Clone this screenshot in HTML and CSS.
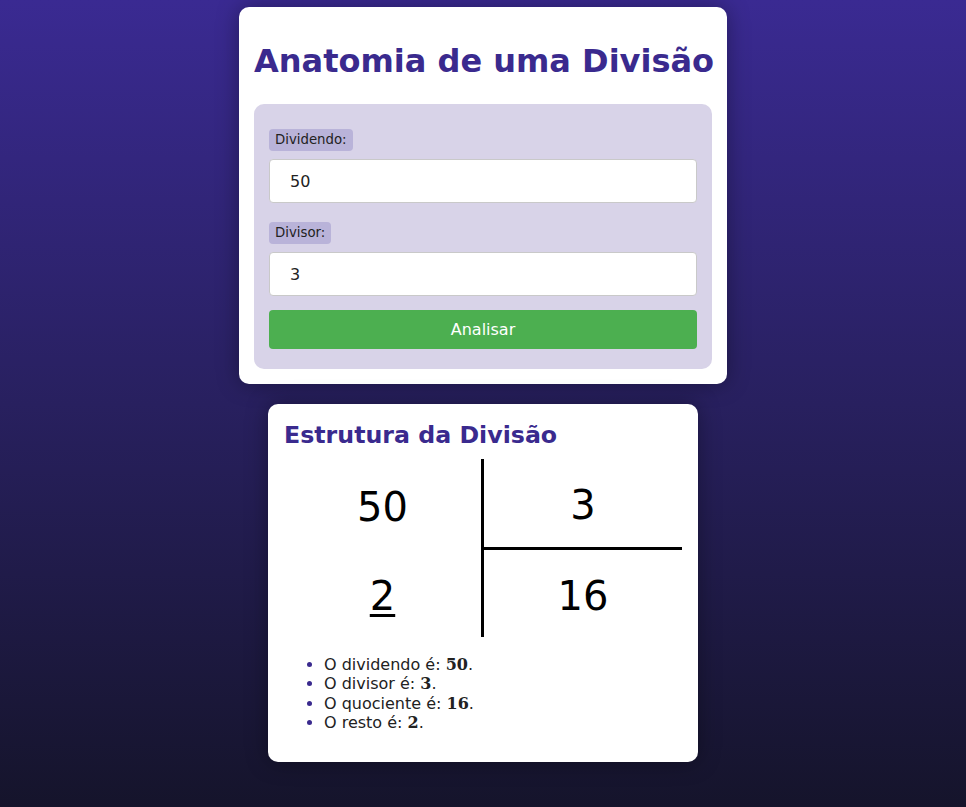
FILE: index.html
```html
<!DOCTYPE html>
<html lang="pt">
<head>
<meta charset="utf-8">
<title>Anatomia de uma Divisão</title>
<link rel="stylesheet" href="styles.css">
</head>
<body>
<main class="page">
  <section class="card card-form">
    <h1 class="title">Anatomia de uma Divisão</h1>
    <form class="form">
      <label class="label" for="dividendo">Dividendo:</label>
      <input class="input" id="dividendo" type="text" value="50">
      <label class="label label-second" for="divisor">Divisor:</label>
      <input class="input" id="divisor" type="text" value="3">
      <button class="button" type="button">Analisar</button>
    </form>
  </section>
  <section class="card card-result">
    <h2 class="subtitle">Estrutura da Divisão</h2>
    <div class="diagram">
      <div class="cell cell-left">50</div>
      <div class="cell cell-top-right">3</div>
      <div class="cell cell-left"><span class="rest">2</span></div>
      <div class="cell">16</div>
    </div>
    <ul class="facts">
      <li>O dividendo é: <strong>50</strong>.</li>
      <li>O divisor é: <strong>3</strong>.</li>
      <li>O quociente é: <strong>16</strong>.</li>
      <li>O resto é: <strong>2</strong>.</li>
    </ul>
  </section>
</main>
</body>
</html>
```
FILE: styles.css
```css
html, body {
  margin: 0;
  min-height: 100%;
}
body {
  min-height: 807px;
  background: linear-gradient(to bottom, #3a2a92 0%, #28205f 50%, #15142b 100%);
  font-family: "DejaVu Sans", Verdana, sans-serif;
  color: #222;
}
.page {
  display: flex;
  flex-direction: column;
  align-items: center;
  gap: 20px;
  padding-top: 7px;
}
.card {
  background: #fff;
  border-radius: 10px;
  box-shadow: 0 0 22px rgba(0, 0, 0, 0.35);
  box-sizing: border-box;
}
.card-form {
  width: 488px;
  padding: 15px;
}
.title {
  margin: 21px 0 24px;
  font-size: 32px;
  font-weight: bold;
  color: #3a2a8e;
  text-align: center;
  line-height: 37px;
  white-space: nowrap;
}
.form {
  display: flex;
  flex-direction: column;
  align-items: flex-start;
  background: #d8d3e8;
  border-radius: 10px;
  padding: 25px 15px 20px;
}
.label {
  background: #b9b3d9;
  border-radius: 4px;
  font-size: 13.3px;
  line-height: 16px;
  padding: 3px 6px;
  color: #222;
}
.label-second {
  margin-top: 19px;
}
.input {
  margin-top: 8px;
  width: 100%;
  height: 44px;
  box-sizing: border-box;
  border: 1px solid #c9c9c9;
  border-radius: 4px;
  background: #fff;
  padding: 0 20px;
  font-family: "DejaVu Sans", Verdana, sans-serif;
  font-size: 16px;
  color: #222;
}
.button {
  margin-top: 14px;
  width: 100%;
  height: 39px;
  border: none;
  border-radius: 4px;
  background: #4caf50;
  color: #fff;
  font-family: "DejaVu Sans", Verdana, sans-serif;
  font-size: 16px;
}
.card-result {
  width: 430px;
  padding: 16px 16px 1px;
}
.subtitle {
  margin: 0 0 9px;
  font-size: 23.7px;
  font-weight: bold;
  color: #3a2a8e;
  line-height: 30px;
}
.diagram {
  display: grid;
  grid-template-columns: 200px 1fr;
  grid-template-rows: 91px 87px;
}
.cell {
  display: flex;
  align-items: center;
  justify-content: center;
  padding-top: 4px;
  font-size: 40px;
  color: #000;
  box-sizing: border-box;
}
.cell-left {
  border-right: 3px solid #000;
}
.cell-top-right {
  border-bottom: 3px solid #000;
}
.rest {
  text-decoration: underline;
  text-decoration-thickness: 3px;
  text-underline-offset: 4px;
}
.facts {
  margin: 18px 0 29px;
  padding-left: 40px;
  font-size: 16px;
  line-height: 19.3px;
  color: #222;
}
.facts li::marker {
  color: #3a2a8e;
}
.facts strong {
  font-family: "DejaVu Serif", serif;
  font-weight: bold;
}
```
